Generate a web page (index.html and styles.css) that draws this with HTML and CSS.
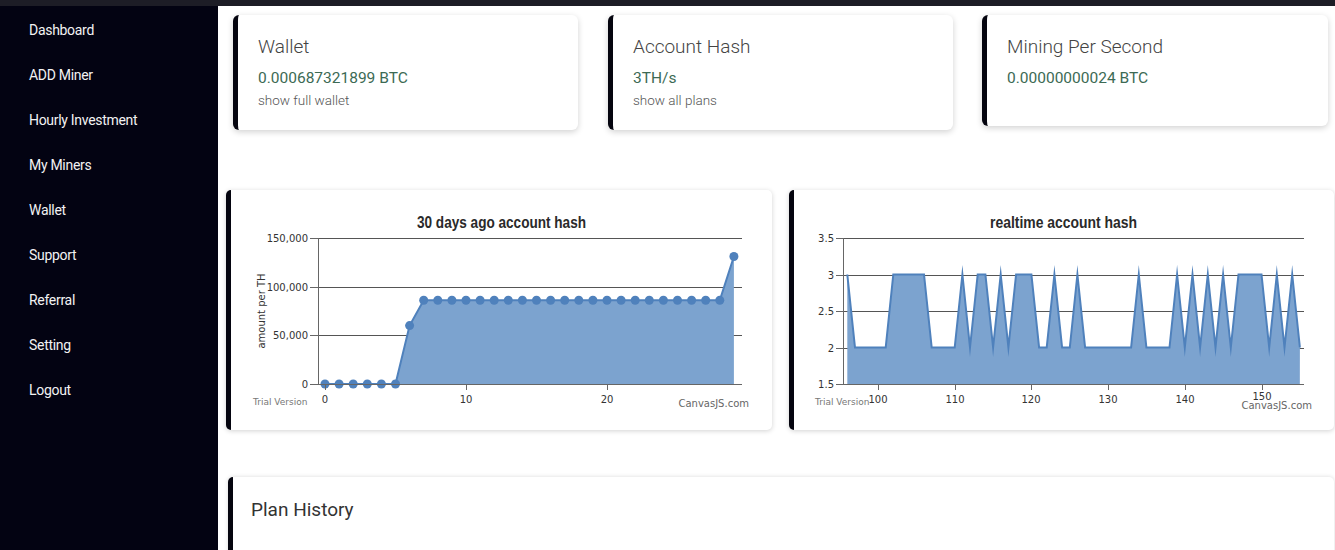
FILE: index.html
```html
<!DOCTYPE html>
<html lang="en">

<head>
    <meta charset="UTF-8">
    <meta name="viewport" content="width=device-width, initial-scale=1.0">
    <title>Dashboard</title>
    <link rel="stylesheet" href="styles.css">
</head>

<body>
    <div class="top-bar"></div>
    <div class="layout">
        <nav class="sidebar">
            <a href="#">Dashboard</a>
            <a href="#">ADD Miner</a>
            <a href="#">Hourly Investment</a>
            <a href="#">My Miners</a>
            <a href="#">Wallet</a>
            <a href="#">Support</a>
            <a href="#">Referral</a>
            <a href="#">Setting</a>
            <a href="#">Logout</a>
        </nav>

        <main class="content">
            <div class="stats">
                <div class="stat-card">
                    <h3>Wallet</h3>
                    <p class="stat-value">0.000687321899 BTC</p>
                    <a href="#" class="stat-link">show full wallet</a>
                </div>
                <div class="stat-card">
                    <h3>Account Hash</h3>
                    <p class="stat-value">3TH/s</p>
                    <a href="#" class="stat-link">show all plans</a>
                </div>
                <div class="stat-card short">
                    <h3>Mining Per Second</h3>
                    <p class="stat-value">0.00000000024 BTC</p>
                </div>
            </div>

            <div class="charts">
                <div class="chart-card">
                    <svg class="chart" width="541" height="240" viewBox="0 0 541 240">
                        <text class="chart-title" x="186" y="38" textLength="169" lengthAdjust="spacingAndGlyphs">30 days ago account hash</text>
                        <g class="grid">
                            <line x1="87" y1="48.5" x2="511" y2="48.5" />
                            <line x1="87" y1="97.5" x2="511" y2="97.5" />
                            <line x1="87" y1="145.5" x2="511" y2="145.5" />
                        </g>
                        <path id="area1" class="area" d="" />
                        <polyline id="line1" class="line" points="" />
                        <g id="dots1" class="dots"></g>
                        <g class="axis">
                            <line x1="87.5" y1="48" x2="87.5" y2="194" />
                            <line x1="79" y1="48.5" x2="87" y2="48.5" />
                            <line x1="79" y1="97.5" x2="87" y2="97.5" />
                            <line x1="79" y1="145.5" x2="87" y2="145.5" />
                            <line x1="79" y1="194.5" x2="511" y2="194.5" />
                            <line x1="94.5" y1="194" x2="94.5" y2="200" />
                            <line x1="235.5" y1="194" x2="235.5" y2="200" />
                            <line x1="376.5" y1="194" x2="376.5" y2="200" />
                        </g>
                        <g class="y-labels">
                            <text x="77" y="52">150,000</text>
                            <text x="77" y="101">100,000</text>
                            <text x="77" y="149">50,000</text>
                            <text x="77" y="198">0</text>
                        </g>
                        <g class="x-labels">
                            <text x="94" y="213">0</text>
                            <text x="235" y="213">10</text>
                            <text x="376" y="213">20</text>
                        </g>
                        <text class="axis-title" transform="translate(34 121) rotate(-90)">amount per TH</text>
                        <text class="trial" x="22" y="215">Trial Version</text>
                        <text class="credit" x="518" y="217">CanvasJS.com</text>
                    </svg>
                </div>

                <div class="chart-card">
                    <svg class="chart" width="540" height="240" viewBox="0 0 540 240">
                        <text class="chart-title" x="196" y="38" textLength="147" lengthAdjust="spacingAndGlyphs">realtime account hash</text>
                        <g class="grid">
                            <line x1="49" y1="48.5" x2="510" y2="48.5" />
                            <line x1="49" y1="85.5" x2="510" y2="85.5" />
                            <line x1="49" y1="121.5" x2="510" y2="121.5" />
                            <line x1="49" y1="158.5" x2="510" y2="158.5" />
                        </g>
                        <path id="area2" class="area" d="" />
                        <polyline id="line2" class="line" points="" />
                        <g class="axis">
                            <line x1="49.5" y1="48" x2="49.5" y2="194" />
                            <line x1="42" y1="48.5" x2="49" y2="48.5" />
                            <line x1="42" y1="85.5" x2="49" y2="85.5" />
                            <line x1="42" y1="121.5" x2="49" y2="121.5" />
                            <line x1="42" y1="158.5" x2="49" y2="158.5" />
                            <line x1="42" y1="194.5" x2="510" y2="194.5" />
                            <line x1="84.5" y1="194" x2="84.5" y2="200" />
                            <line x1="161.5" y1="194" x2="161.5" y2="200" />
                            <line x1="237.5" y1="194" x2="237.5" y2="200" />
                            <line x1="314.5" y1="194" x2="314.5" y2="200" />
                            <line x1="391.5" y1="194" x2="391.5" y2="200" />
                            <line x1="468.5" y1="194" x2="468.5" y2="200" />
                        </g>
                        <g class="y-labels">
                            <text x="40" y="52">3.5</text>
                            <text x="40" y="89">3</text>
                            <text x="40" y="125">2.5</text>
                            <text x="40" y="162">2</text>
                            <text x="40" y="198">1.5</text>
                        </g>
                        <g class="x-labels">
                            <text x="84" y="213">100</text>
                            <text x="161" y="213">110</text>
                            <text x="237" y="213">120</text>
                            <text x="314" y="213">130</text>
                            <text x="391" y="213">140</text>
                            <text x="468" y="210">150</text>
                        </g>
                        <text class="trial" x="21" y="215">Trial Version</text>
                        <text class="credit" x="518" y="219">CanvasJS.com</text>
                    </svg>
                </div>
            </div>

            <div class="plan-card">
                <h3>Plan History</h3>
            </div>
        </main>
    </div>

    <script>
        // 30 days chart
        const days = [0, 0, 0, 0, 0, 0, 60000];
        for (let i = 7; i <= 28; i++) days.push(86000);
        days.push(131000);

        // realtime chart, x from 96 to 155
        const realtime = [3, 2, 2, 2, 2, 2, 3, 3, 3, 3, 3, 2, 2, 2, 2, 3, 2, 3, 3, 2,
            3, 2, 3, 3, 3, 2, 2, 3, 2, 2, 3, 2, 2, 2, 2, 2, 2, 2, 3, 2,
            2, 2, 2, 3, 2, 3, 2, 3, 2, 3, 2, 3, 3, 3, 3, 2, 3, 2, 3, 2];

        function drawSeries(values, toX, toY, base, lineId, areaId, dotsId) {
            const pts = values.map((v, i) => [toX(i), toY(v)]);
            const str = pts.map(p => p[0].toFixed(1) + ',' + p[1].toFixed(1)).join(' ');
            document.getElementById(lineId).setAttribute('points', str);
            const first = pts[0];
            const last = pts[pts.length - 1];
            document.getElementById(areaId).setAttribute('d',
                'M' + first[0] + ',' + base + ' L' + str + ' L' + last[0] + ',' + base + ' Z');
            if (dotsId) {
                const g = document.getElementById(dotsId);
                pts.forEach(p => {
                    const c = document.createElementNS('http://www.w3.org/2000/svg', 'circle');
                    c.setAttribute('cx', p[0]);
                    c.setAttribute('cy', p[1]);
                    c.setAttribute('r', 4.5);
                    g.appendChild(c);
                });
            }
        }

        drawSeries(days, i => 94 + i * 14.1, v => 194 - v / 150000 * 146, 194, 'line1', 'area1', 'dots1');
        drawSeries(realtime, i => 84 + (i - 4) * 7.67, v => 194 - (v - 1.5) * 73, 194, 'line2', 'area2');
    </script>
</body>

</html>
```

FILE: styles.css
```css
body {
    margin: 0;
    font-family: Roboto, "Noto Sans", Arial, sans-serif;
    background-color: #fff;
    height: 100vh;
    overflow: hidden;
}

.top-bar {
    height: 6px;
    background-color: #1d1d26;
}

.layout {
    display: flex;
    height: calc(100vh - 6px);
}

.sidebar {
    width: 218px;
    flex-shrink: 0;
    background-color: #030312;
    display: flex;
    flex-direction: column;
    padding-top: 14px;
}

.sidebar a {
    color: #f2f2f2;
    text-decoration: none;
    font-size: 14px;
    letter-spacing: -0.3px;
    line-height: 20px;
    padding: 0 0 25px 29px;
}

.content {
    flex: 1;
}

.stats {
    display: grid;
    grid-template-columns: 345px 345px 345px;
    column-gap: 30px;
    align-items: start;
    margin: 9px 0 0 15px;
}

.stat-card {
    height: 115px;
    box-sizing: border-box;
    background-color: #fff;
    border-left: 5px solid #05050f;
    border-radius: 6px;
    box-shadow: 0 2px 6px rgba(0, 0, 0, 0.18);
    padding: 21px 20px 0;
}

.stat-card.short {
    height: 111px;
    margin-left: -1px;
}

.stat-card h3 {
    margin: 0;
    font-size: 19px;
    font-weight: 300;
    color: #444;
    line-height: 22px;
}

.stat-value {
    margin: 11px 0 0;
    font-size: 15.5px;
    color: #3c6a54;
    line-height: 18px;
}

.stat-link {
    display: block;
    margin-top: 5px;
    font-size: 13.5px;
    font-weight: 300;
    color: #555;
    text-decoration: none;
    line-height: 16px;
}

.charts {
    display: grid;
    grid-template-columns: 546px 545px;
    column-gap: 17px;
    margin: 60px 0 0 8px;
}

.chart-card {
    height: 240px;
    box-sizing: border-box;
    background-color: #fff;
    border-left: 5px solid #05050f;
    border-radius: 5px;
    box-shadow: 0 1px 5px rgba(0, 0, 0, 0.18);
    overflow: hidden;
}

.chart {
    display: block;
    font-family: "DejaVu Sans", Verdana, sans-serif;
}

.chart-title {
    font-family: "Liberation Sans", Arial, sans-serif;
    font-weight: bold;
    font-size: 17px;
    fill: #2a2a2a;
}

.grid line {
    stroke: #555;
    stroke-width: 1;
}

.axis line {
    stroke: #666;
    stroke-width: 1;
}

.area {
    fill: #7ca3cf;
    stroke: none;
}

.line {
    fill: none;
    stroke: #4f81bc;
    stroke-width: 2;
    stroke-linejoin: miter;
    stroke-miterlimit: 10;
}

.dots circle {
    fill: #4f81bc;
}

.y-labels text {
    font-size: 10px;
    fill: #333;
    text-anchor: end;
}

.x-labels text {
    font-size: 10px;
    fill: #333;
    text-anchor: middle;
}

.axis-title {
    font-size: 10px;
    fill: #333;
    text-anchor: middle;
}

.trial {
    font-size: 9px;
    fill: #777;
}

.credit {
    font-size: 10px;
    fill: #666;
    text-anchor: end;
}

.plan-card {
    margin: 47px 1px 0 10px;
    height: 90px;
    box-sizing: border-box;
    border-left: 5px solid #05050f;
    border-radius: 5px;
    box-shadow: 0 0 4px rgba(0, 0, 0, 0.15);
    padding: 21px 18px;
}

.plan-card h3 {
    margin: 0;
    font-size: 19px;
    font-weight: 400;
    color: #333;
    line-height: 24px;
}
```
